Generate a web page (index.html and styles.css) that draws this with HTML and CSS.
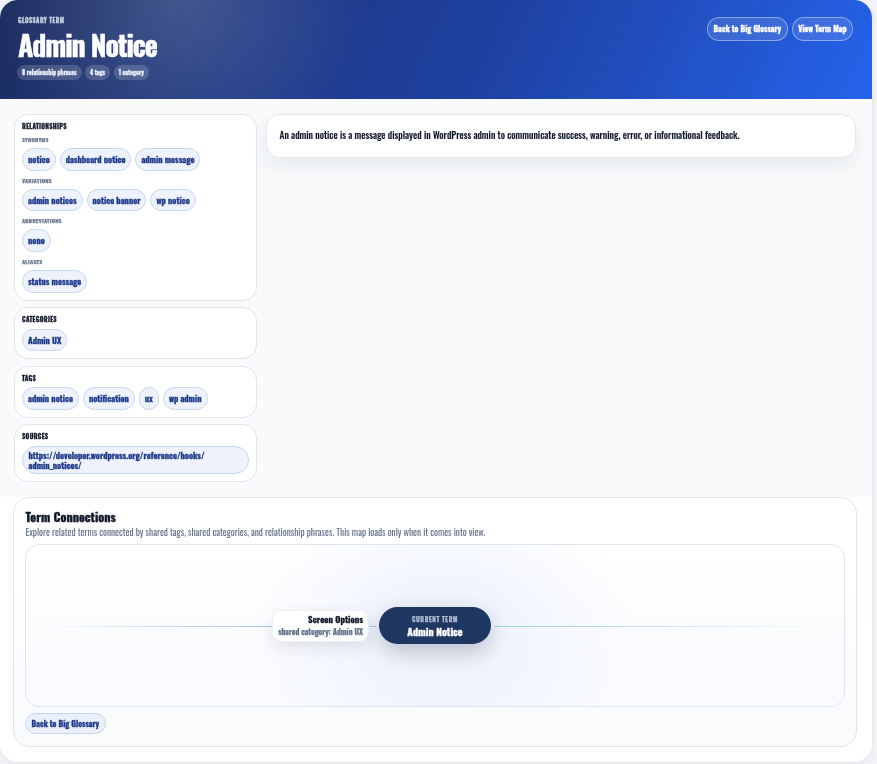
FILE: index.html
```html
<!DOCTYPE html>
<html lang="en">
<head>
<meta charset="utf-8">
<title>Admin Notice</title>
<link rel="stylesheet" href="styles.css">
</head>
<body>
<div class="shell">
  <header class="hero">
    <div class="hero-copy">
      <div class="eyebrow">GLOSSARY TERM</div>
      <h1>Admin Notice</h1>
      <div class="stats">
        <span class="stat">8 relationship phrases</span>
        <span class="stat">4 tags</span>
        <span class="stat">1 category</span>
      </div>
    </div>
    <div class="hero-actions">
      <a class="ghost">Back to Big Glossary</a>
      <a class="ghost">View Term Map</a>
    </div>
  </header>
  <main class="main">
    <aside class="side">
      <section class="card">
        <h2>RELATIONSHIPS</h2>
        <h3>SYNONYMS</h3>
        <div class="pills"><a class="pill">notice</a><a class="pill">dashboard notice</a><a class="pill">admin message</a></div>
        <h3>VARIATIONS</h3>
        <div class="pills"><a class="pill">admin notices</a><a class="pill">notice banner</a><a class="pill">wp notice</a></div>
        <h3>ABBREVIATIONS</h3>
        <div class="pills"><a class="pill">none</a></div>
        <h3>ALIASES</h3>
        <div class="pills"><a class="pill">status message</a></div>
      </section>
      <section class="card">
        <h2>CATEGORIES</h2>
        <div class="pills"><a class="pill">Admin UX</a></div>
      </section>
      <section class="card">
        <h2>TAGS</h2>
        <div class="pills"><a class="pill">admin notice</a><a class="pill">notification</a><a class="pill">ux</a><a class="pill">wp admin</a></div>
      </section>
      <section class="card">
        <h2>SOURCES</h2>
        <div class="pills"><a class="pill source">https://developer.wordpress.org/reference/hooks/<br>admin_notices/</a></div>
      </section>
    </aside>
    <section class="definition">An admin notice is a message displayed in WordPress admin to communicate success, warning, error, or informational feedback.</section>
  </main>
  <div class="lower">
    <section class="connections">
      <h2 class="conn-title">Term Connections</h2>
      <p class="conn-sub">Explore related terms connected by shared tags, shared categories, and relationship phrases. This map loads only when it comes into view.</p>
      <div class="map">
        <div class="wing wing-left">
          <div class="line line-left"></div>
          <div class="node">
            <strong>Screen Options</strong>
            <span>shared category: Admin UX</span>
          </div>
          <div class="line line-mid"></div>
        </div>
        <div class="current">
          <span>CURRENT TERM</span>
          <strong>Admin Notice</strong>
        </div>
        <div class="wing wing-right">
          <div class="line line-right"></div>
        </div>
      </div>
      <a class="back">Back to Big Glossary</a>
    </section>
  </div>
</div>
</body>
</html>
```
FILE: styles.css
```css
* { box-sizing: border-box; }
html, body { margin: 0; padding: 0; }
body {
  background: #f1f3f6;
  height: 764px;
  overflow: hidden;
  font-family: "Oswald", "Liberation Sans", sans-serif;
  color: #0f172a;
}
.shell {
  width: 872px;
  height: 761.5px;
  background: #fff;
  border-radius: 18px;
  overflow: hidden;
  box-shadow: 0 1px 4px rgba(15, 23, 42, .1);
  display: flex;
  flex-direction: column;
  will-change: transform;
}
.hero {
  height: 99px;
  flex: none;
  padding: 17px 19px 0 18px;
  display: flex;
  justify-content: space-between;
  align-items: flex-start;
  color: #fff;
  background:
    radial-gradient(circle at 180px 0, rgba(255, 255, 255, .17), rgba(255, 255, 255, 0) 190px),
    linear-gradient(115deg, #1c2d60 0%, #1e40a0 55%, #2563eb 100%);
}
.eyebrow {
  font-size: 6px;
  line-height: 7px;
  font-weight: 700;
  letter-spacing: .5px;
  color: #cbd5e1;
  -webkit-text-stroke: .3px currentColor;
}
h1 {
  margin: 3px 0 2px;
  font-size: 28px;
  line-height: 36px;
  font-weight: 700;
  letter-spacing: -1.1px;
  -webkit-text-stroke: .4px currentColor;
}
.stats { display: flex; gap: 3.5px; margin-left: -1px; }
.stat {
  height: 15px;
  padding: 0 5px;
  border-radius: 8px;
  background: rgba(255, 255, 255, .17);
  font-size: 6px;
  line-height: 15px;
  font-weight: 700;
  color: #e8edf7;
  -webkit-text-stroke: .3px currentColor;
}
.hero-actions { display: flex; gap: 4px; }
.ghost {
  height: 24px;
  padding: 0 5.5px;
  border: 1px solid rgba(255, 255, 255, .4);
  border-radius: 12px;
  background: rgba(255, 255, 255, .12);
  font-size: 8px;
  line-height: 21px;
  font-weight: 700;
  color: #fff;
  -webkit-text-stroke: .3px currentColor;
}
.main {
  height: 398px;
  flex: none;
  background: #f8fafc;
  padding: 15px 16px 0 13.5px;
  display: grid;
  grid-template-columns: 243px 1fr;
  column-gap: 9px;
  align-items: start;
}
.side { display: flex; flex-direction: column; gap: 6.5px; }
.card {
  background: #fff;
  border: 1px solid #dfe5ef;
  border-radius: 14px;
  padding: 7px 7px 7px 7.5px;
}
h2 {
  margin: 0;
  font-size: 6.4px;
  line-height: 8px;
  font-weight: 700;
  letter-spacing: .3px;
  color: #0f172a;
  -webkit-text-stroke: .3px currentColor;
}
h3 {
  margin: 6px 0 5px;
  font-size: 5.6px;
  line-height: 7px;
  font-weight: 700;
  letter-spacing: .25px;
  color: #6b7a90;
  -webkit-text-stroke: .25px currentColor;
}
.card h2 + .pills { margin-top: 5.5px; }
.pills { display: flex; flex-wrap: wrap; gap: 4px; }
.pill {
  height: 22.67px;
  padding: 0 5px;
  border: 1px solid #c9d6ee;
  border-radius: 12px;
  background: #edf2fc;
  font-size: 8.5px;
  line-height: 20.5px;
  font-weight: 700;
  color: #1e3a8a;
  -webkit-text-stroke: .3px currentColor;
}
.source {
  width: 100%;
  height: 27.7px;
  padding: 3.2px 5.5px;
  line-height: 10px;
  border-radius: 14px;
}
.definition {
  height: 43.5px;
  background: #fff;
  border: 1px solid #e2e8f0;
  border-radius: 14px;
  padding: 0 13px;
  box-shadow: 0 8px 22px rgba(15, 23, 42, .07);
  font-size: 9.35px;
  line-height: 41px;
  font-weight: 500;
  color: #0f172a;
  -webkit-text-stroke: .1px currentColor;
}
.lower {
  flex: 1;
  background: #fff;
  padding: 0 15px 14px 13px;
}
.connections {
  height: 250px;
  border: 1px solid #dfe5ef;
  border-radius: 16px;
  padding: 11px 11px 0 11px;
  background: linear-gradient(180deg, #fff 0%, #fff 30%, #f8fafc 100%);
}
.conn-title {
  margin-left: .5px;
  font-size: 12.4px;
  line-height: 15px;
  letter-spacing: 0;
  -webkit-text-stroke: .35px currentColor;
}
.conn-sub {
  margin: 2px 0 6px .5px;
  font-size: 9.25px;
  line-height: 12px;
  color: #64748b;
}
.map {
  height: 163px;
  border: 1px solid #dfe5ef;
  border-radius: 14px;
  background:
    radial-gradient(ellipse 190px 140px at 51% 50%, rgba(219, 228, 250, .5), rgba(219, 228, 250, 0) 100%),
    linear-gradient(180deg, #fff 0%, #f8fafe 100%);
  display: grid;
  grid-template-columns: 1fr 112px 1fr;
  align-items: center;
  padding: 0 12px;
}
.wing { display: flex; align-items: center; }
.wing-left { padding-right: 3px; }
.wing-right { padding-left: 3px; }
.line { height: 1px; margin-top: 1px; }
.line-left { flex: 1; background: linear-gradient(90deg, rgba(147, 180, 215, 0), #a3c3e6 100%); }
.line-mid { width: 7px; background: #a3c3e6; }
.line-right { flex: 1; background: linear-gradient(90deg, #9ccfd0, rgba(156, 207, 208, 0)); }
.node {
  width: 97px;
  height: 32px;
  flex: none;
  background: #fff;
  border: 1px solid #eef2f7;
  border-radius: 10px;
  padding: 2.5px 5px 0 0;
  box-shadow: 0 6px 16px rgba(15, 23, 42, .1);
  text-align: right;
  display: flex;
  flex-direction: column;
}
.node strong { font-size: 8.9px; line-height: 13px; color: #0f172a; -webkit-text-stroke: .3px currentColor; }
.node span { font-size: 7.7px; line-height: 11px; font-weight: 700; color: #64748b; -webkit-text-stroke: .25px currentColor; }
.current {
  height: 37px;
  padding-top: 2px;
  background: #1f3763;
  border-radius: 19px;
  box-shadow: 0 8px 22px rgba(15, 23, 42, .22);
  text-align: center;
  display: flex;
  flex-direction: column;
  justify-content: center;
}
.current span { font-size: 6.2px; line-height: 10px; font-weight: 700; letter-spacing: .6px; color: #b6c2d6; -webkit-text-stroke: .25px currentColor; }
.current strong { font-size: 10.2px; line-height: 14px; color: #fff; -webkit-text-stroke: .3px currentColor; }
.back {
  display: inline-block;
  margin-top: 6px;
  height: 20.5px;
  padding: 0 5.5px;
  border: 1px solid #c9d6ee;
  border-radius: 11px;
  background: #e9effb;
  font-size: 8px;
  line-height: 18px;
  font-weight: 700;
  color: #1e3a8a;
  -webkit-text-stroke: .3px currentColor;
}
```
